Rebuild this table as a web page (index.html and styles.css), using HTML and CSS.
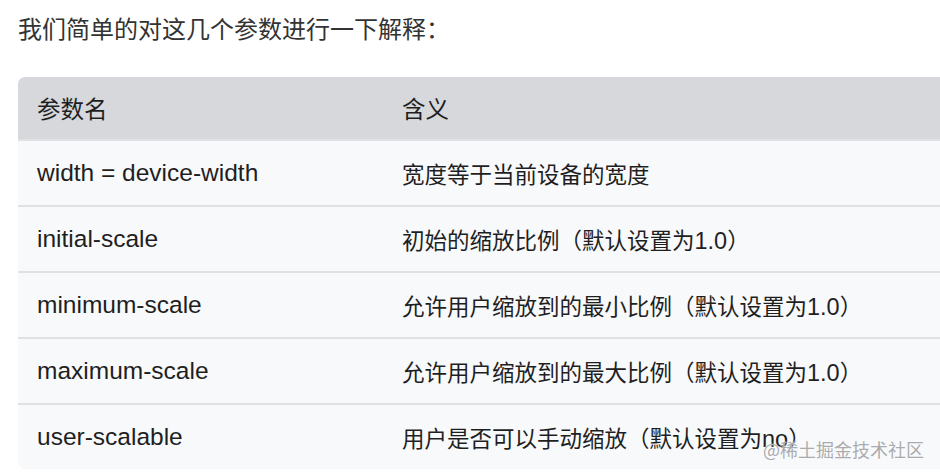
FILE: index.html
```html
<!DOCTYPE html>
<html lang="zh-CN">
<head>
<meta charset="utf-8">
<link rel="stylesheet" href="styles.css">
</head>
<body>
<div class="page">
  <p class="intro">我们简单的对这几个参数进行一下解释：</p>
  <div class="table">
    <div class="row head"><div class="c1">参数名</div><div class="c2">含义</div></div>
    <div class="row"><div class="c1 lat">width = device-width</div><div class="c2">宽度等于当前设备的宽度</div></div>
    <div class="row"><div class="c1 lat">initial-scale</div><div class="c2">初始的缩放比例（默认设置为<span class="num">1.0</span>）</div></div>
    <div class="row"><div class="c1 lat">minimum-scale</div><div class="c2">允许用户缩放到的最小比例（默认设置为<span class="num">1.0</span>）</div></div>
    <div class="row"><div class="c1 lat">maximum-scale</div><div class="c2">允许用户缩放到的最大比例（默认设置为<span class="num">1.0</span>）</div></div>
    <div class="row last"><div class="c1 lat">user-scalable</div><div class="c2">用户是否可以手动缩放（默认设置为<span class="num">no</span>）</div></div>
  </div>
  <div class="watermark">@稀土掘金技术社区</div>
</div>
</body>
</html>
```
FILE: styles.css
```css
html, body {
  margin: 0;
  padding: 0;
  background: #fff;
}
body {
  font-family: "Liberation Sans", "Noto Sans CJK SC", sans-serif;
  color: #1f1f1f;
  width: 940px;
  height: 476px;
  overflow: hidden;
}
.page {
  position: relative;
  padding: 14px 0 0 18px;
  height: 476px;
  box-sizing: border-box;
}
.intro {
  margin: 0;
  font-size: 24px;
  line-height: 32px;
  color: #333;
}
.table {
  margin-top: 31px;
  width: 960px;
  border-radius: 7px;
  overflow: hidden;
  background: #f8f9fb;
  font-size: 22.5px;
}
.row {
  display: flex;
  align-items: center;
  height: 64px;
  border-top: 2px solid #dfe1e4;
}
.row.head {
  background: #d6d8db;
  border-top: none;
  height: 62px;
  font-size: 23.5px;
}
.c1 {
  width: 365px;
  padding-left: 19px;
}
.c1.lat {
  font-size: 24.5px;
}
.c2 {
  flex: 1;
}
.num {
  font-size: 23.5px;
}
.watermark {
  position: absolute;
  left: 763px;
  top: 436px;
  font-size: 18px;
  color: #a9abaf;
  font-family: "Noto Sans CJK SC", sans-serif;
  text-shadow: 0 0 2px #fff;
}
```
